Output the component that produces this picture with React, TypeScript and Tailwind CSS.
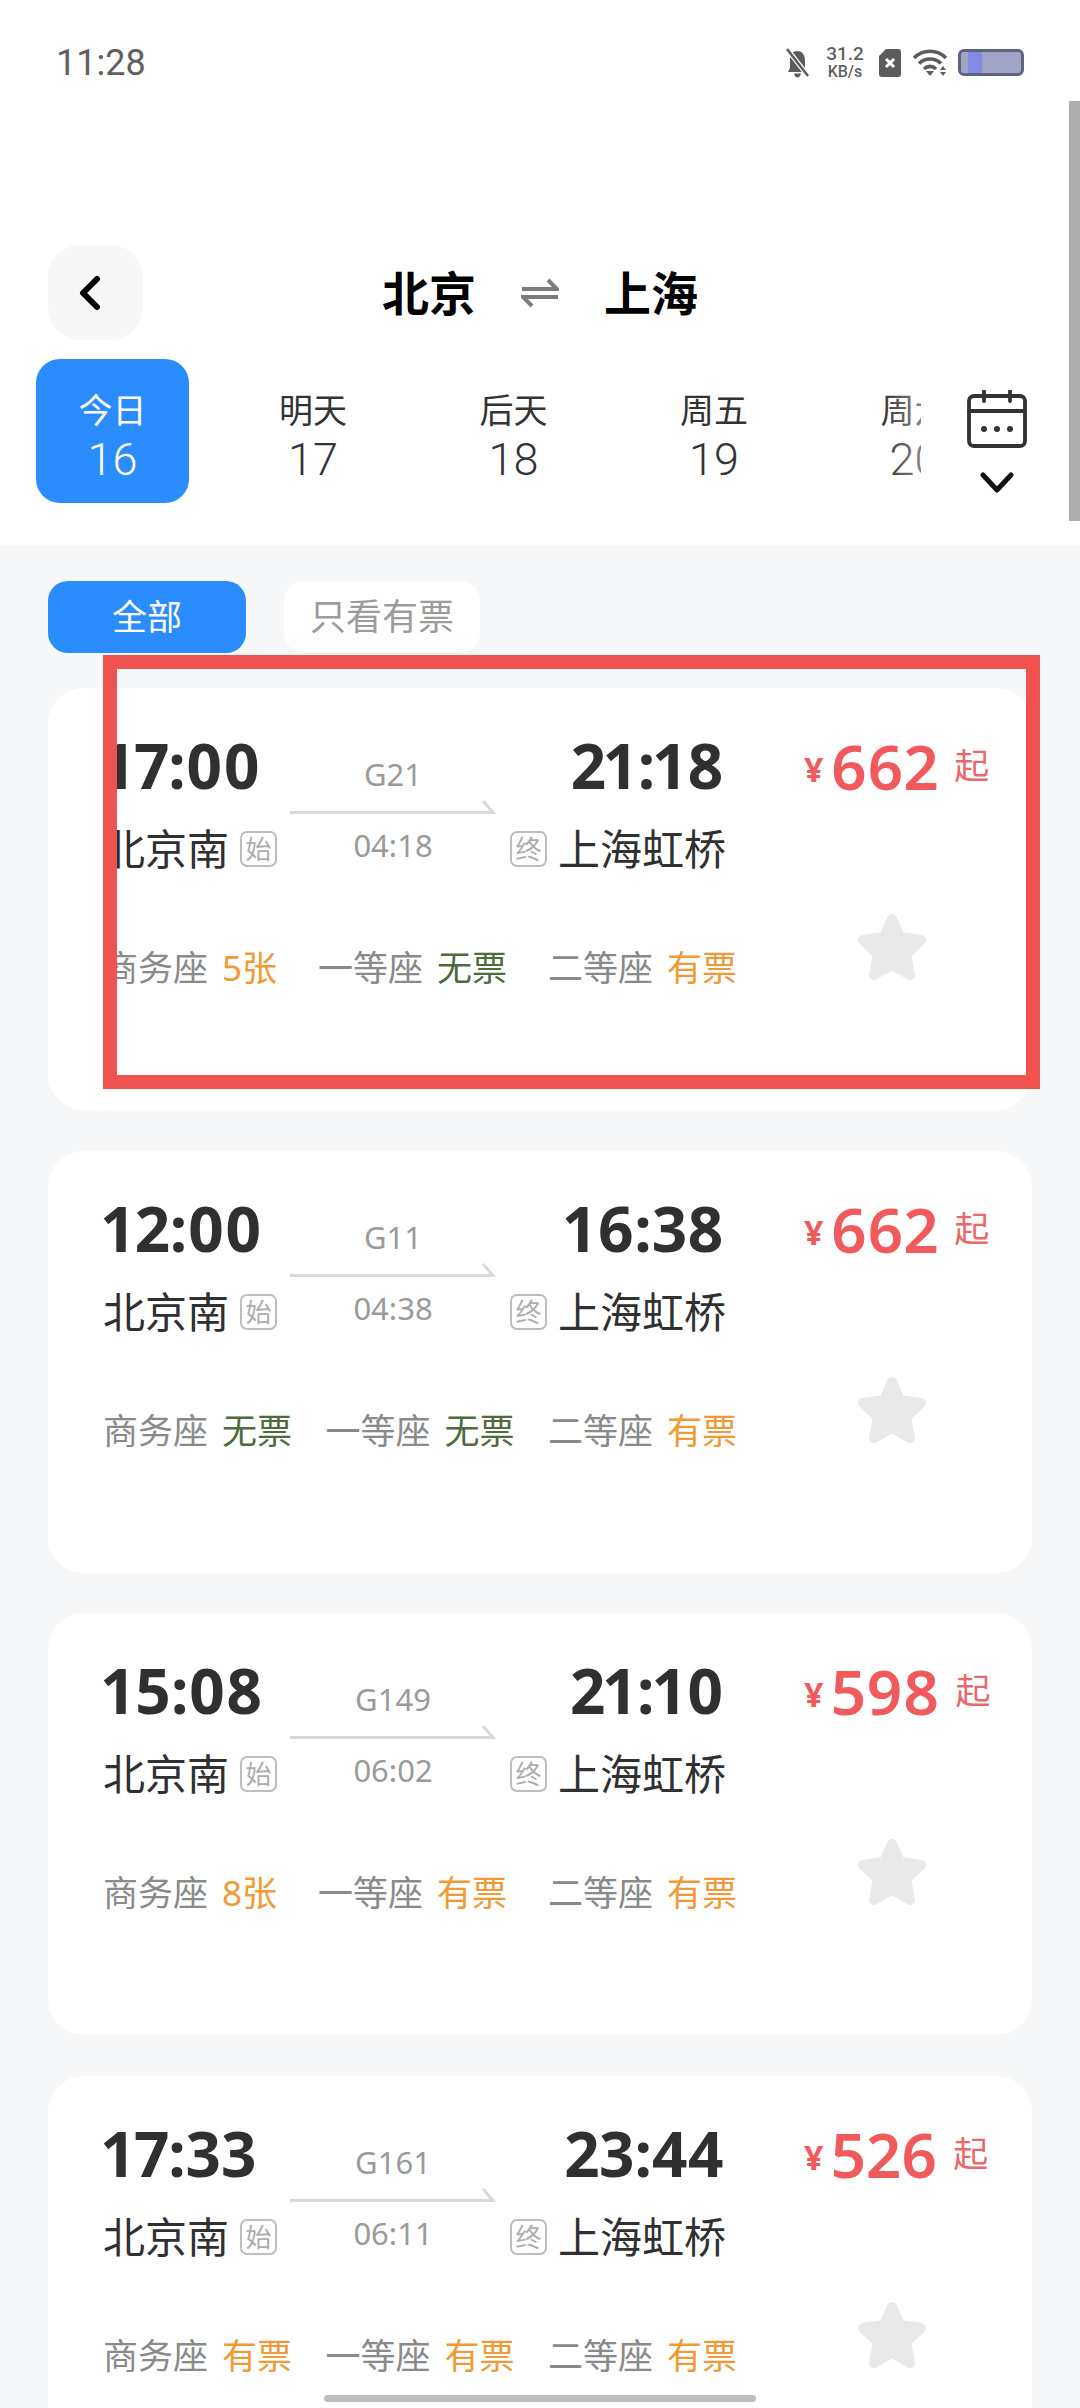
import React from "react";

type Seat = { name: string; value: string; green?: boolean };
type Train = { dep: string; arr: string; no: string; dur: string; price: string; seats: Seat[] };

const trains: Train[] = [
  { dep: "17:00", arr: "21:18", no: "G21", dur: "04:18", price: "662", seats: [
    { name: "商务座", value: "5张" }, { name: "一等座", value: "无票", green: true }, { name: "二等座", value: "有票" } ] },
  { dep: "12:00", arr: "16:38", no: "G11", dur: "04:38", price: "662", seats: [
    { name: "商务座", value: "无票", green: true }, { name: "一等座", value: "无票", green: true }, { name: "二等座", value: "有票" } ] },
  { dep: "15:08", arr: "21:10", no: "G149", dur: "06:02", price: "598", seats: [
    { name: "商务座", value: "8张" }, { name: "一等座", value: "有票" }, { name: "二等座", value: "有票" } ] },
  { dep: "17:33", arr: "23:44", no: "G161", dur: "06:11", price: "526", seats: [
    { name: "商务座", value: "有票" }, { name: "一等座", value: "有票" }, { name: "二等座", value: "有票" } ] },
];

const days = [
  { label: "今日", num: "16" }, { label: "明天", num: "17" }, { label: "后天", num: "18" },
  { label: "周五", num: "19" }, { label: "周六", num: "20" },
];

function Badge({ text }: { text: string }) {
  return (
    <span className="flex h-[36px] w-[37px] shrink-0 items-center justify-center rounded-[7px] border-2 border-[#bdbdbd] text-[26px] leading-none text-[#adadad]">
      {text}
    </span>
  );
}

function Star() {
  return (
    <svg width="72" height="70" viewBox="0 0 72 70" fill="#e9e9e9" stroke="#e9e9e9" strokeWidth="10" strokeLinejoin="round">
      <path d="M36 7 L44 25 L65 28 L50 42 L54 63 L36 53 L18 63 L22 42 L7 28 L28 25 Z" />
    </svg>
  );
}

function Card({ t }: { t: Train }) {
  return (
    <div className="flex h-[422px] shrink-0 rounded-[36px] bg-white pl-[55px] pt-[41px]">
      <div className="w-[634px] shrink-0">
        <div className="flex">
          <div className="w-[172px] shrink-0">
            <div className="h-[72px] whitespace-nowrap text-[62px] font-bold leading-[72px] text-[#303030] proportional-nums">{t.dep}</div>
            <div className="mt-[24px] flex h-[48px] items-center gap-[11px] text-[42px] leading-[48px] text-[#303030]">
              <span className="shrink-0">北京南</span>
              <Badge text="始" />
            </div>
          </div>
          <div className="ml-[15px] flex w-[206px] shrink-0 flex-col items-center pt-[25px] text-[31px] leading-[40px] text-[#9a9a9a]">
            <span>{t.no}</span>
            <svg className="mt-[6px]" width="206" height="14" viewBox="0 0 206 14" fill="none" stroke="#d9d9d9" strokeWidth="3">
              <path d="M0 12.5 H203 L193 1" />
            </svg>
            <span className="mt-[11px]">{t.dur}</span>
          </div>
          <div className="ml-[14px] w-[214px] shrink-0 text-[#303030]">
            <div className="h-[72px] whitespace-nowrap text-right text-[62px] font-bold leading-[72px] proportional-nums">{t.arr}</div>
            <div className="mt-[24px] flex h-[48px] items-center gap-[11px] text-[42px] leading-[48px]">
              <Badge text="终" />
              <span className="shrink-0">上海虹桥</span>
            </div>
          </div>
        </div>
        <div className="mt-[71px] flex h-[48px] items-center justify-between text-[35px] leading-[48px]">
          {t.seats.map((s) => (
            <div key={s.name} className="flex gap-[14px]">
              <span className="text-[#8a8a8a]">{s.name}</span>
              <span className={s.green ? "text-[#4d6b3c]" : "text-[#ef9a36]"}>{s.value}</span>
            </div>
          ))}
        </div>
      </div>
      <div className="ml-[67px] flex flex-col">
        <div className="mt-[1px] flex h-[72px] items-center whitespace-nowrap text-[#f15a5c]">
          <span className="mt-[6px] text-[34px] font-bold leading-[40px]">¥</span>
          <span className="ml-[7px] text-[62px] font-semibold leading-[72px] proportional-nums">{t.price}</span>
          <span className="ml-[16px] text-[35px] leading-[40px] text-[#e9686b]">起</span>
        </div>
        <div className="ml-[52px] mt-[110px]">
          <Star />
        </div>
      </div>
    </div>
  );
}

export default function App() {
  return (
    <div
      lang="zh-CN"
      className="relative h-[2408px] w-[1080px] overflow-hidden bg-[#f5f7f9] font-['Noto_Sans','Noto_Sans_CJK_SC',sans-serif]"
    >
      <header className="h-[545px] bg-white">
        <div className="flex h-[125px] items-start pl-[56px] pr-[56px] pt-[45px]">
          <span className="font-['Roboto',sans-serif] text-[36px] font-normal leading-[36px] text-[#5f5f5f]">11:28</span>
          <div className="ml-auto flex items-center">
            <svg width="27" height="30" viewBox="0 0 27 30" fill="#5c5c5c">
              <path d="M13 3 C19 3 21 8 21 13 V20 L24 24 H4 L6 20 V11 C6 6 9 3 13 3Z" />
              <path d="M10 25.5 H17 C16.5 28 15 29.5 13.5 29.5 C12 29.5 10.5 28 10 25.5Z" />
              <path d="M3 1 L25 29" stroke="#fff" strokeWidth="5" />
              <path d="M3 1 L24 28" stroke="#5c5c5c" strokeWidth="2.5" />
            </svg>
            <div className="ml-[13px] flex w-[42px] flex-col items-center font-['Roboto',sans-serif] text-[#5f5f5f]">
              <span className="text-[19px] font-medium leading-[18px]">31.2</span>
              <span className="text-[16px] font-medium leading-[17px]">KB/s</span>
            </div>
            <svg className="ml-[13px]" width="22" height="28" viewBox="0 0 22 28">
              <path d="M7 0 H19 Q22 0 22 3 V25 Q22 28 19 28 H3 Q0 28 0 25 V7 Z" fill="#5c5c5c" />
              <path d="M7 10 L15 18 M15 10 L7 18" stroke="#fff" strokeWidth="3" />
            </svg>
            <svg className="ml-[11px]" width="36" height="28" viewBox="0 0 36 28" fill="none" stroke="#5c5c5c" strokeWidth="3.6">
              <path d="M2 9 C11 0 25 0 34 9" />
              <path d="M7 14.5 C13 8.5 23 8.5 29 14.5" />
              <path d="M12 20 C15.5 16.5 20.5 16.5 24 20" />
              <path d="M14 22 H22 L18 27 Z" fill="#5c5c5c" stroke="none" />
              <path d="M31 17 L34 21 H28 Z M28 23 H34 L31 27 Z" fill="#5c5c5c" stroke="none" />
            </svg>
            <div className="ml-[10px] h-[27px] w-[66px] overflow-hidden rounded-[6px] border-[3px] border-[#5e6480] bg-[#a0a4c6]">
              <div className="ml-[7px] h-full w-[14px] bg-[#8489e4]" />
            </div>
          </div>
        </div>

        <div className="mt-[120px] flex h-[95px] items-center pl-[48px]">
          <div className="flex h-[95px] w-[95px] items-center justify-center rounded-[32px] bg-[#f7f7f7] pr-[11px]">
            <svg width="24" height="36" viewBox="0 0 24 36" fill="none" stroke="#000" strokeWidth="6" strokeLinecap="round" strokeLinejoin="round">
              <path d="M19 4 L5 18 L19 32" />
            </svg>
          </div>
          <div className="ml-[239px] flex items-center text-[47px] font-bold leading-[60px] text-black">
            <span>北京</span>
            <svg className="mx-[45px]" width="38" height="30" viewBox="0 0 38 30" fill="none" stroke="#7c7c7c" strokeWidth="4">
              <path d="M1 11 H36 L27 2" />
              <path d="M37 19 H2 L11 28" />
            </svg>
            <span>上海</span>
          </div>
        </div>

        <div className="mt-[19px] flex h-[144px]">
          <div className="relative w-[921px] shrink-0 overflow-hidden pl-[36px]">
            <div className="flex gap-[47.5px]">
              {days.map((d, i) => (
                <div
                  key={d.label}
                  className={`flex h-[144px] w-[153px] shrink-0 flex-col items-center justify-center rounded-[24px] pt-[12px] ${
                    i === 0 ? "bg-[#2a8cff] text-white" : "text-[#333333]"
                  }`}
                >
                  <span className="text-[34px] leading-[46px]">{d.label}</span>
                  <span className="font-['Roboto',sans-serif] text-[45px] font-light leading-[54px]">{d.num}</span>
                </div>
              ))}
            </div>
            <div className="absolute right-0 top-0 h-full w-[40px] bg-gradient-to-r from-white/0 to-white/40" />
          </div>
          <div className="flex w-[159px] flex-col items-start pl-[46px] pt-[31px]">
            <svg width="60" height="58" viewBox="0 0 60 58" fill="none" stroke="#333" strokeWidth="3.8" strokeLinecap="round">
              <rect x="2" y="6" width="56" height="50" rx="5" />
              <path d="M2 21 H58" />
              <path d="M17 1 V11 M43 1 V11" />
              <circle cx="17" cy="39" r="3" fill="#333" stroke="none" />
              <circle cx="30" cy="39" r="3" fill="#333" stroke="none" />
              <circle cx="43" cy="39" r="3" fill="#333" stroke="none" />
            </svg>
            <svg className="ml-[13px] mt-[24px]" width="34" height="22" viewBox="0 0 34 22" fill="none" stroke="#111" strokeWidth="5" strokeLinecap="round" strokeLinejoin="round">
              <path d="M3 3 L17 18 L31 3" />
            </svg>
          </div>
        </div>
      </header>

      <div className="mt-[36px] flex gap-[38px] pl-[48px]">
        <div className="flex h-[72px] w-[198px] items-center justify-center rounded-[20px] bg-[#2a8cff] text-[35px] text-white">全部</div>
        <div className="flex h-[72px] w-[196px] items-center justify-center rounded-[20px] bg-white text-[36px] text-[#9c9c9c]">只看有票</div>
      </div>

      <div className="mx-[48px] mt-[35px] flex flex-col gap-[40.5px]">
        {trains.map((t) => (
          <Card key={t.no} t={t} />
        ))}
      </div>

      <div className="absolute left-[103px] top-[655px] h-[434px] w-[937px] border-[14px] border-[#f0534f]" />
      <div className="absolute right-0 top-[101px] h-[420px] w-[11px] bg-[#adadad]" />
      <div className="absolute bottom-[6px] left-[324px] h-[7px] w-[432px] rounded-full bg-[#bdbdbd]" />
    </div>
  );
}
